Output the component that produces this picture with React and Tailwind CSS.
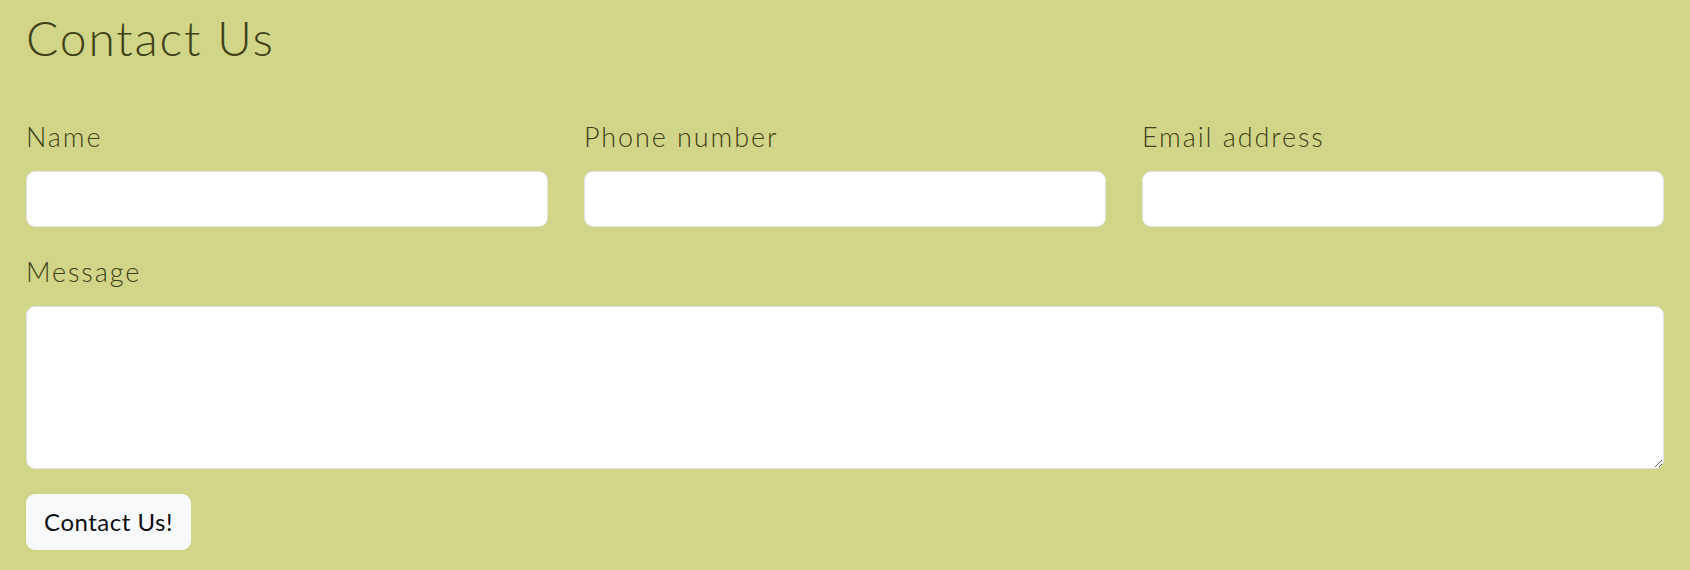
import React from "react";

export default function App() {
  const label =
    "block text-[27px] leading-[40px] mb-[14px] text-[#3f4218] font-light tracking-[1.9px]";
  const input =
    "block w-full h-[56px] bg-white border border-[#dee2e6] rounded-[9px] px-4 outline-none";
  return (
    <div
      className="w-[1690px] h-[570px] bg-[#d1d587] px-[26px] pt-[9px] overflow-hidden"
      style={{ fontFamily: "Lato, 'Open Sans', sans-serif" }}
    >
      <h1 className="text-[48px] leading-[1.2] text-[#3f4218] font-light tracking-[1.8px]">
        Contact Us
      </h1>
      <form className="mt-[50px]">
        <div className="grid grid-cols-3 gap-x-[36px]">
          <div>
            <label className={label}>Name</label>
            <input type="text" className={input} />
          </div>
          <div>
            <label className={label}>Phone number</label>
            <input type="tel" className={input} />
          </div>
          <div>
            <label className={label}>Email address</label>
            <input type="email" className={input} />
          </div>
        </div>
        <div className="mt-[25px]">
          <label className={label}>Message</label>
          <textarea className="block w-full h-[163px] bg-white border border-[#dee2e6] rounded-[9px] px-4 py-2 outline-none" />
        </div>
        <button
          type="button"
          className="mt-[25px] h-[56px] w-[165px] bg-[#f8f9fa] rounded-[9px] text-[24px] text-[#0d0d12] leading-none tracking-[0.5px]"
        >
          Contact Us!
        </button>
      </form>
    </div>
  );
}
